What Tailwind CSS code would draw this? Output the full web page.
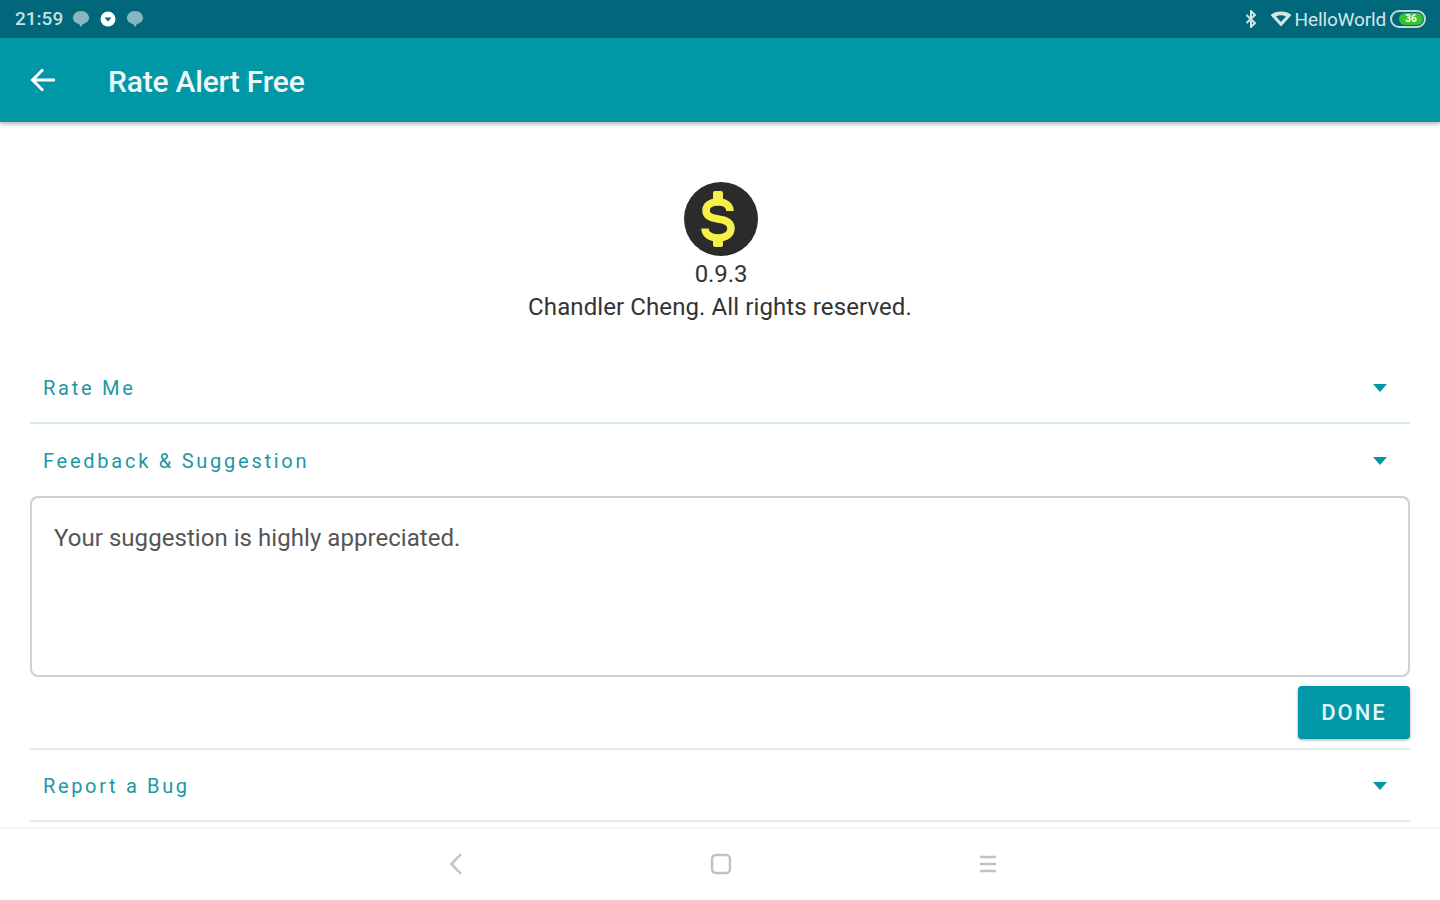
<!DOCTYPE html>
<html lang="en">
<head>
    <meta charset="UTF-8">
    <meta name="viewport" content="width=device-width, initial-scale=1.0">
    <title>Rate Alert Free</title>
    <script src="https://cdn.jsdelivr.net/npm/@tailwindcss/browser@4"></script>
</head>
<body class="w-[1440px] h-[900px] overflow-hidden bg-white flex flex-col font-[Roboto,sans-serif]">
    <!-- status bar -->
    <div class="h-[38px] shrink-0 bg-[#00687a] flex items-center justify-between pl-[15px] pr-[14px] text-[#d5e6e8]">
        <div class="flex items-center">
            <span class="text-[19px] w-[50px] font-medium tracking-[0px] text-[#c9dfe2]">21:59</span>
            <svg class="ml-[7px] text-[#86b9bf]" width="18" height="18" viewBox="0 0 18 18" fill="currentColor"><path d="M9 1c4.500 0 8 2.800 8 7 0 3.500-3.500 5.500-6 6l-2 3-2-3c-2.500-.5-6-2.500-6-6 0-4.200 3.500-7 8-7z"/></svg>
            <svg class="ml-[10px] text-white" width="16" height="16" viewBox="0 0 16 16"><circle cx="8" cy="8" r="7.500" fill="currentColor"/><path d="M4.500 6.500h7L8 10.500z" fill="#00687a"/></svg>
            <svg class="ml-[10px] text-[#86b9bf]" width="18" height="18" viewBox="0 0 18 18" fill="currentColor"><path d="M9 1c4.500 0 8 2.800 8 7 0 3.500-3.500 5.500-6 6l-2 3-2-3c-2.500-.5-6-2.500-6-6 0-4.200 3.500-7 8-7z"/></svg>
        </div>
        <div class="flex items-center">
            <svg width="12" height="18" viewBox="0 0 12 18" fill="none" stroke="currentColor" stroke-width="2"><path d="M1.500 5l8.500 8-4 4V1l4 4-8.500 8"/></svg>
            <svg class="ml-[13px]" width="22" height="16" viewBox="0 0 22 16" fill="currentColor"><path d="M11 15.500L0.500 4C3.500 1.500 7 0.500 11 0.500s7.500 1 10.500 3.500zM11 11l5-5.500c-1.500-.8-3.200-1.200-5-1.200s-3.500.4-5 1.200z" fill-rule="evenodd"/></svg>
            <span class="ml-[3px] text-[19px] tracking-[-0.15px] leading-none">HelloWorld</span>
            <div class="ml-[4px] w-[36px] h-[18px] rounded-full border-2 border-[#c3d8da] p-[1px] flex justify-end">
                <div class="w-[24px] h-full rounded-full bg-[#37c42c] text-[10px] leading-[12px] text-center text-white font-bold">36</div>
            </div>
        </div>
    </div>

    <!-- app bar -->
    <header class="h-[84px] shrink-0 bg-[#0097a7] flex items-center shadow-[0_2px_4px_rgba(0,0,0,0.3)] relative pl-[30px] text-white">
        <svg width="26" height="26" viewBox="0 0 26 26" fill="none" stroke="currentColor" stroke-width="3"><path d="M25 13H3M13 2.500 2.500 13 13 23.500"/></svg>
        <h1 class="ml-[52px] pt-[3px] text-[30px] font-medium tracking-[-0.2px] text-[#eef8f9]">Rate Alert Free</h1>
    </header>

    <main class="flex-1 flex flex-col px-[30px] pt-[59px] min-h-0">
        <div class="flex flex-col items-center">
            <svg class="ml-[2px]" width="76" height="76" viewBox="0 0 76 76">
                <circle cx="38" cy="38" r="37" fill="#2b2b2b"/>
                <rect x="30" y="10" width="10" height="12" rx="2" fill="#f6f04a"/>
                <rect x="30" y="54" width="10" height="12" rx="2" fill="#f6f04a"/>
                <path d="M47 30c0-5-4-9-12-9s-12 4-12 8.500 4 7.500 12 8.500 13 4 13 9.500-5 9.500-13 9.500-13-4-13-9.500" fill="none" stroke="#f6f04a" stroke-width="7.500"/>
            </svg>
            <div class="ml-[2px] text-[24px] leading-[33px] text-[#333] tracking-[-0.1px] mt-[1px]">0.9.3</div>
            <div class="text-[24px] leading-[33px] text-[#333] tracking-[0.1px]">Chandler Cheng. All rights reserved.</div>
        </div>

        <div class="mt-[29px] h-[71px] shrink-0 border-b-2 border-[#d5e8e9] flex items-center justify-between pl-[13px] pr-[22px]">
            <span class="text-[20px] tracking-[2.750px] text-[#1d96a6]">Rate Me</span>
            <svg width="16" height="8" viewBox="0 0 16 8" fill="#0097a7"><path d="M1 0h14L8 8z"/></svg>
        </div>
        <div class="h-[72px] shrink-0 flex items-center justify-between pl-[13px] pr-[22px] pt-[2px]">
            <span class="text-[20px] tracking-[2.750px] text-[#1d96a6]">Feedback &amp; Suggestion</span>
            <svg class="mb-[1px]" width="16" height="8" viewBox="0 0 16 8" fill="#0097a7"><path d="M1 0h14L8 8z"/></svg>
        </div>

        <div class="h-[181px] shrink-0 border-2 border-[#cfcfcf] rounded-[8px] px-[22px] pt-[24px] text-[24px] leading-[33px] text-[#555] tracking-[0.05px]">Your suggestion is highly appreciated.</div>

        <div class="flex justify-end mt-[9px]">
            <button class="w-[112px] h-[53px] bg-[#0097a7] rounded-[4px] text-[22px] font-medium tracking-[2px] text-[#e4f4f5] shadow-[0_1px_3px_rgba(0,0,0,0.35)]">DONE</button>
        </div>

        <div class="mt-[9px] border-t-2 border-[#e0eeee] h-[74px] shrink-0 border-b-2 flex items-center justify-between pl-[13px] pr-[22px] pt-[2px]">
            <span class="text-[20px] tracking-[2.650px] text-[#1d96a6]">Report a Bug</span>
            <svg class="mb-[1px]" width="16" height="8" viewBox="0 0 16 8" fill="#0097a7"><path d="M1 0h14L8 8z"/></svg>
        </div>
    </main>

    <!-- nav bar -->
    <nav class="h-[73px] shrink-0 border-t-2 border-[#f3f6f6] bg-white flex items-center justify-center gap-[247px] pl-[6px] pb-[2px] text-[#c2c2c2]">
        <svg width="14" height="24" viewBox="0 0 14 24" fill="none" stroke="currentColor" stroke-width="2.500"><path d="M12 2 2.500 12 12 22"/></svg>
        <svg width="22" height="22" viewBox="0 0 22 22" fill="none" stroke="currentColor" stroke-width="2.500"><rect x="2" y="2" width="18" height="18" rx="4"/></svg>
        <svg width="18" height="18" viewBox="0 0 18 18" fill="none" stroke="currentColor" stroke-width="2.500"><path d="M1 2h16M1 9h16M1 16h16"/></svg>
    </nav>
</body>
</html>
